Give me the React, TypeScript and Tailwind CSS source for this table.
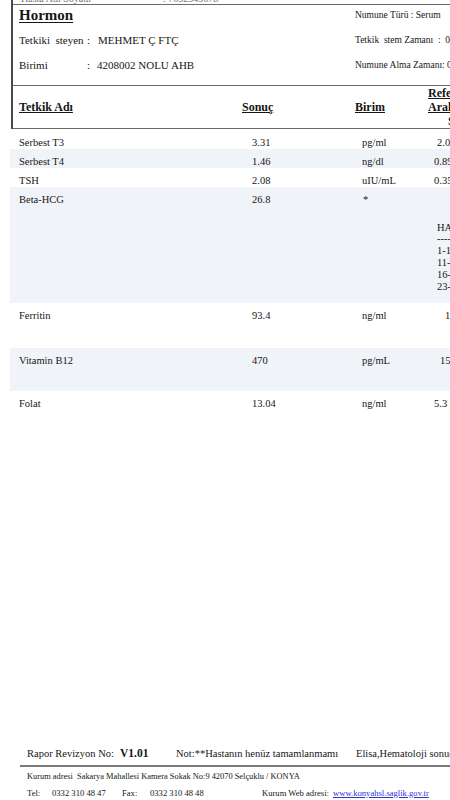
import React from "react";

type Row = {
  name: string;
  result: string;
  unit: string;
  ref: string;
  refClass: string;
  rowClass: string;
};

const rows: Row[] = [
  { name: "Serbest T3", result: "3.31", unit: "pg/ml", ref: "2.0 - 4.4", refClass: "pl-[3px]", rowClass: "h-[19px]" },
  { name: "Serbest T4", result: "1.46", unit: "ng/dl", ref: "0.89 - 1.76", refClass: "pl-0", rowClass: "h-[19px] bg-[#f0f3f8]" },
  { name: "TSH", result: "2.08", unit: "uIU/mL", ref: "0.35 - 5.5", refClass: "pl-0", rowClass: "h-[19px]" },
];

const hcgWeeks = ["1-10. Hafta", "11-15. Hafta", "16-22. Hafta", "23-40. Hafta"];

const tailRows: Row[] = [
  { name: "Ferritin", result: "93.4", unit: "ng/ml", ref: "10 - 291", refClass: "pl-[11px]", rowClass: "h-[45px]" },
  { name: "Vitamin B12", result: "470", unit: "pg/mL", ref: "150 - 900", refClass: "pl-[6px]", rowClass: "h-[43px] bg-[#f0f3f8]" },
  { name: "Folat", result: "13.04", unit: "ng/ml", ref: "5.3 - 24", refClass: "pl-0", rowClass: "h-[40px]" },
];

function ResultRow({ row }: { row: Row }) {
  return (
    <div className={`flex w-[700px] pt-[6px] text-[10.5px] leading-[13px] ${row.rowClass}`}>
      <div className="w-[242px] shrink-0 pl-[9px]">{row.name}</div>
      <div className="w-[110px] shrink-0">{row.result}</div>
      <div className="w-[72px] shrink-0">{row.unit}</div>
      <div className={`whitespace-nowrap ${row.refClass}`}>{row.ref}</div>
    </div>
  );
}

export default function App() {
  return (
    <div className="w-[450px] h-[800px] overflow-hidden bg-white flex flex-col font-['Liberation_Serif',serif] text-[#161616]">
      {/* report header box */}
      <div className="ml-[11px] w-[700px] border-l-2 border-[#4a4a4a]">
        <div className="h-[4px] overflow-hidden flex items-end pl-[8px] text-[10px] leading-[11px] text-[#777]">
          <span className="w-[142px] shrink-0">Hasta Adı Soyadı</span>
          <span>: 7652345678</span>
        </div>
        <div className="border-t border-[#6b6b6b] pt-[1px] pb-[11px] flex flex-col gap-[7px]">
          <div className="h-[18px] flex items-center">
            <div className="w-[342px] shrink-0 pl-[6px]">
              <span className="text-[15px] font-bold underline underline-offset-[2px]">Hormon</span>
            </div>
            <div className="text-[9.5px] whitespace-nowrap">Numune Türü : Serum</div>
          </div>
          <div className="h-[18px] flex items-center">
            <div className="w-[342px] shrink-0 pl-[6px] flex text-[11px]">
              <span className="w-[68px] shrink-0 whitespace-pre">Tetkiki  steyen</span>
              <span className="w-[11px] shrink-0">:</span>
              <span>MEHMET Ç FTÇ</span>
            </div>
            <div className="text-[9.5px] whitespace-pre">Tetkik  stem Zamanı  :  08.05.2024 09:12</div>
          </div>
          <div className="h-[18px] flex items-center">
            <div className="w-[342px] shrink-0 pl-[6px] flex text-[11px]">
              <span className="w-[68px] shrink-0">Birimi</span>
              <span className="w-[10px] shrink-0">:</span>
              <span>4208002 NOLU AHB</span>
            </div>
            <div className="text-[9.5px] whitespace-nowrap">Numune Alma Zamanı: 08.05.2024 08:40</div>
          </div>
        </div>
        <div className="border-t border-b border-[#6b6b6b] flex items-center h-[44px] text-[12px] font-bold">
          <div className="w-[229px] shrink-0 pl-[6px]"><span className="underline">Tetkik Adı</span></div>
          <div className="w-[113px] shrink-0"><span className="underline">Sonuç</span></div>
          <div className="w-[73px] shrink-0"><span className="underline">Birim</span></div>
          <div className="flex flex-col leading-[14px]">
            <span className="underline">Referans</span>
            <span className="underline">Aralığı</span>
            <span className="pl-[20px]">Sınır</span>
          </div>
        </div>
      </div>

      {/* results */}
      <div className="ml-[10px] mt-[1px]">
        {rows.map((r) => (
          <ResultRow key={r.name} row={r} />
        ))}
        <div className="flex w-[700px] h-[116px] pt-[6px] bg-[#f0f3f8] text-[10.5px] leading-[13px]">
          <div className="w-[242px] shrink-0 pl-[9px]">Beta-HCG</div>
          <div className="w-[110px] shrink-0">26.8</div>
          <div className="w-[72px] shrink-0 pl-[1px]">*</div>
          <div className="pl-[3px] pt-[29px] flex flex-col leading-[12px] whitespace-nowrap">
            <span className="mb-[-1px]">HAFTA</span>
            <span>----------------</span>
            {hcgWeeks.map((w) => (
              <span key={w}>{w}</span>
            ))}
          </div>
        </div>
        {tailRows.map((r) => (
          <ResultRow key={r.name} row={r} />
        ))}
      </div>

      {/* footer */}
      <div className="mt-auto pb-[1px]">
        <div className="h-[16px] flex items-center pl-[27px] text-[10.5px] whitespace-pre">
          <span className="w-[93px] shrink-0">Rapor Revizyon No:</span>
          <span className="w-[56px] shrink-0 font-bold text-[11.5px]">V1.01</span>
          <span className="w-[180px] shrink-0">Not:**Hastanın henüz tamamlanmamı</span>
          <span className="shrink-0">Elisa,Hematoloji sonuçları</span>
        </div>
        <div className="mt-[3px] ml-[20px] h-[2px] bg-[#7a7a7a]"></div>
        <div className="mt-[4px] h-[12px] flex items-center pl-[27px] text-[8.4px] whitespace-pre">
          <span>Kurum adresi  Sakarya Mahallesi Kamera Sokak No:9 42070 Selçuklu / KONYA</span>
        </div>
        <div className="mt-[4px] h-[12px] flex items-center pl-[27px] text-[8.6px] whitespace-nowrap">
          <span className="w-[25px] shrink-0">Tel:</span>
          <span className="w-[70px] shrink-0">0332 310 48 47</span>
          <span className="w-[28px] shrink-0">Fax:</span>
          <span className="w-[112px] shrink-0">0332 310 48 48</span>
          <span className="w-[71px] shrink-0">Kurum Web adresi:</span>
          <span className="shrink-0 text-[#2a35d6] underline">www.konyahsl.saglik.gov.tr</span>
        </div>
      </div>
    </div>
  );
}
